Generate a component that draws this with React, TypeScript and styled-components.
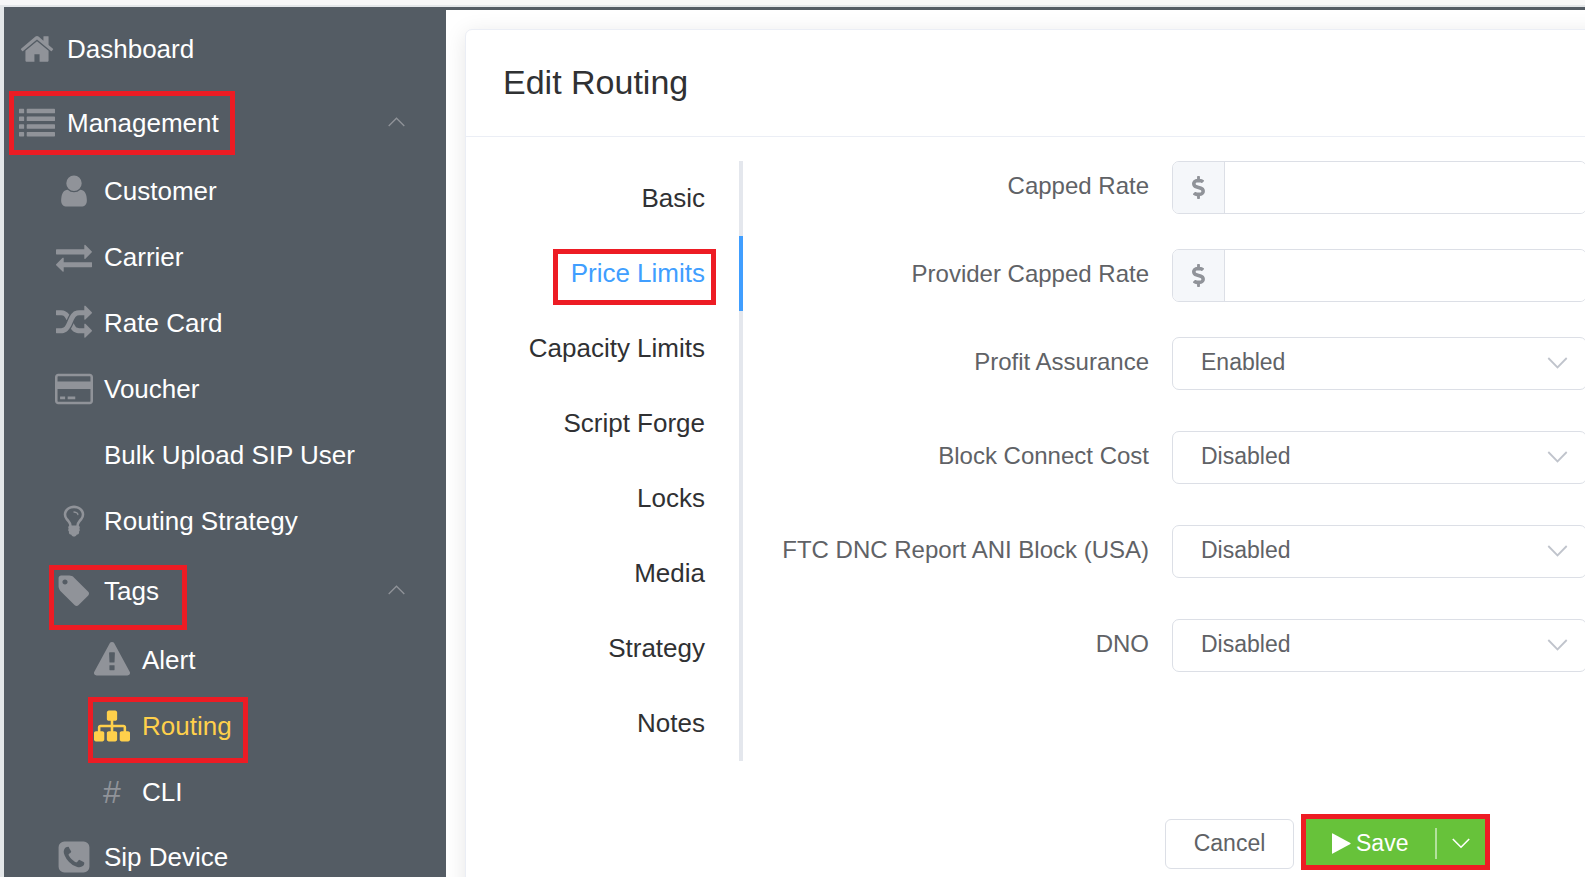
import React from "react";
import styled, { createGlobalStyle } from "styled-components";
import { FaDollarSign } from "react-icons/fa";

const GlobalStyle = createGlobalStyle`
  *, *::before, *::after { box-sizing: border-box; }
  body {
    margin: 0;
    overflow: hidden;
    background: #f7f7f7;
    font-family: "Liberation Sans", Arial, sans-serif;
  }
  button, input, select { font-family: inherit; }
`;

const glyphs: Record<string, { d: string; width?: number }> = {
  home: {
    d: "M1472 992v480q0 26-19 45t-45 19h-384v-384h-256v384h-384q-26 0-45-19t-19-45v-480q0-1 .5-3t.5-3l575-474 575 474q1 2 1 6zm223-69l-62 74q-8 9-21 11h-3q-13 0-21-7l-692-577-692 577q-12 8-24 7-13-2-21-11l-62-74q-8-10-7-23.5t11-21.5l719-599q32-26 76-26t76 26l244 204v-195q0-14 9-23t23-9h192q14 0 23 9t9 23v408l219 182q10 8 11 21.5t-7 23.5z",
  },
  list: {
    d: "M32 192h192q32 0 32 32v160q0 32-32 32h-192q-32 0-32-32v-160q0-32 32-32zM32 576h192q32 0 32 32v160q0 32-32 32h-192q-32 0-32-32v-160q0-32 32-32zM32 960h192q32 0 32 32v160q0 32-32 32h-192q-32 0-32-32v-160q0-32 32-32zM32 1344h192q32 0 32 32v160q0 32-32 32h-192q-32 0-32-32v-160q0-32 32-32zM416 192h1344q32 0 32 32v160q0 32-32 32h-1344q-32 0-32-32v-160q0-32 32-32zM416 576h1344q32 0 32 32v160q0 32-32 32h-1344q-32 0-32-32v-160q0-32 32-32zM416 960h1344q32 0 32 32v160q0 32-32 32h-1344q-32 0-32-32v-160q0-32 32-32zM416 1344h1344q32 0 32 32v160q0 32-32 32h-1344q-32 0-32-32v-160q0-32 32-32z",
  },
  user: {
    d: "M1536 1399q0 109-62.5 187t-150.5 78h-854q-88 0-150.5-78t-62.5-187q0-85 8.5-160.5t31.5-152 58.5-131 94-89 134.5-34.5q131 128 313 128t313-128q76 0 134.5 34.5t94 89 58.5 131 31.5 152 8.5 160.5zm-256-887q0 159-112.5 271.5t-271.5 112.5-271.5-112.5-112.5-271.5 112.5-271.5 271.5-112.5 271.5 112.5 112.5 271.5z",
  },
  exchange: {
    d: "M1792 1184v192q0 13-9.5 22.5t-22.5 9.5h-1376v192q0 13-9.5 22.5t-22.5 9.5q-12 0-24-10l-319-320q-9-9-9-22 0-14 9-23l320-320q9-9 23-9 13 0 22.5 9.5t9.5 22.5v192h1376q13 0 22.5 9.5t9.5 22.5zm0-544q0 14-9 23l-320 320q-9 9-23 9-13 0-22.5-9.5t-9.5-22.5v-192h-1376q-13 0-22.5-9.5t-9.5-22.5v-192q0-13 9.5-22.5t22.5-9.5h1376v-192q0-14 9-23t23-9q12 0 24 10l319 319q9 9 9 23z",
  },
  random: {
    d: "M666 481q-60 92-137 273-22-45-37-72.5t-40.5-63.5-51-56.5-63-35-81.5-14.5h-224q-14 0-23-9t-9-23v-192q0-14 9-23t23-9h224q250 0 410 225zm1126 799q0 14-9 23l-320 320q-9 9-23 9-13 0-22.5-9.5t-9.5-22.5v-192q-32 0-85 .5t-81 1-73-1-71-5-64-10.5-63-18.5-58-28.5-59-40-55-53.5-56-69.5q59-93 136-273 22 45 37 72.5t40.5 63.5 51 56.5 63 35 81.5 14.5h256v-192q0-14 9-23t23-9q12 0 24 10l319 319q9 9 9 23zm0-896q0 14-9 23l-320 320q-9 9-23 9-13 0-22.5-9.5t-9.5-22.5v-192h-256q-48 0-87 15t-69 45-51 61.5-45 77.5q-32 62-78 171-29 66-49.5 111t-54 105-64 100-74 83-90 68.5-106.5 42-128 16.5h-224q-14 0-23-9t-9-23v-192q0-14 9-23t23-9h224q48 0 87-15t69-45 51-61.5 45-77.5q32-62 78-171 29-66 49.5-111t54-105 64-100 74-83 90-68.5 106.5-42 128-16.5h256v-192q0-14 9-23t23-9q12 0 24 10l319 319q9 9 9 23z",
  },
  card: {
    width: 1920,
    d: "M1760 128q66 0 113 47t47 113v1216q0 66-47 113t-113 47h-1600q-66 0-113-47t-47-113v-1216q0-66 47-113t113-47h1600zm-1600 128q-13 0-22.5 9.5t-9.5 22.5v224h1664v-224q0-13-9.5-22.5t-22.5-9.5h-1600zm1600 1280q13 0 22.5-9.5t9.5-22.5v-608h-1664v608q0 13 9.5 22.5t22.5 9.5h1600zm-1504-128v-128h256v128h-256zm384 0v-128h384v128h-384z",
  },
  bulb: {
    d: "M1120 576q0 13-9.5 22.5t-22.5 9.5-22.5-9.5-9.5-22.5q0-46-54-71t-106-25q-13 0-22.5-9.5t-9.5-22.5 9.5-22.5 22.5-9.5q50 0 99.5 16t87 54 37.5 90zm160 0q0-72-34.5-134t-90-101.5-123-62-136.5-22.5-136.5 22.5-123 62-90 101.5-34.5 134q0 101 68 180 10 11 30.5 33t30.5 33q128 153 141 298h228q13-145 141-298 10-11 30.5-33t30.5-33q68-79 68-180zm128 0q0 155-103 268-45 49-74.5 87t-59.5 95.5-34 107.5q47 28 47 82 0 37-25 64 25 27 25 64 0 52-45 81 13 23 13 47 0 46-31.5 71t-77.5 25q-20 44-60 70t-87 26-87-26-60-70q-46 0-77.5-25t-31.5-71q0-24 13-47-45-29-45-81 0-37 25-64-25-27-25-64 0-54 47-82-4-50-34-107.5t-59.5-95.5-74.5-87q-103-113-103-268 0-99 44.5-184.5t117-142 164-89 186.5-32.5 186.5 32.5 164 89 117 142 44.5 184.5z",
  },
  tag: {
    d: "M576 448q0-53-37.5-90.5t-90.5-37.5-90.5 37.5-37.5 90.5 37.5 90.5 90.5 37.5 90.5-37.5 37.5-90.5zm1067 576q0 53-37 90l-491 492q-39 37-91 37-53 0-90-37l-715-716q-38-37-64.5-101t-26.5-117v-416q0-52 38-90t90-38h416q53 0 117 26.5t102 64.5l715 714q37 39 37 91z",
  },
  warning: {
    d: "M1024 1375v-190q0-14-9.5-23.5t-22.5-9.5h-192q-13 0-22.5 9.5t-9.5 23.5v190q0 14 9.5 23.5t22.5 9.5h192q13 0 22.5-9.5t9.5-23.5zm-2-374l18-459q0-12-10-19-13-11-24-11h-220q-11 0-24 11-10 7-10 21l17 457q0 10 10 16.5t24 6.5h185q14 0 23.5-6.5t10.5-16.5zm-14-934l768 1408q35 63-2 126-17 29-46.5 46t-63.5 17h-1536q-34 0-63.5-17t-46.5-46q-37-63-2-126l768-1408q17-31 47-49t65-18 65 18 47 49z",
  },
  sitemap: {
    d: "M1792 1248v320q0 40-28 68t-68 28h-320q-40 0-68-28t-28-68v-320q0-40 28-68t68-28h96v-192h-512v192h96q40 0 68 28t28 68v320q0 40-28 68t-68 28h-320q-40 0-68-28t-28-68v-320q0-40 28-68t68-28h96v-192h-512v192h96q40 0 68 28t28 68v320q0 40-28 68t-68 28h-320q-40 0-68-28t-28-68v-320q0-40 28-68t68-28h96v-192q0-52 38-90t90-38h512v-192h-96q-40 0-68-28t-28-68v-320q0-40 28-68t68-28h320q40 0 68 28t28 68v320q0 40-28 68t-68 28h-96v192h512q52 0 90 38t38 90v192h96q40 0 68 28t28 68z",
  },
  phone: {
    d: "M1408 1193q0-11-2-16t-18-16.5-40.5-25-47.5-26.5-45.5-25-28.5-15q-5-3-19-13t-25-15-21-5q-15 0-36.5 20.5t-39.5 45-38.5 45-33.5 20.5q-7 0-16.5-3.5t-15.5-6.5-17-9.5-14-8.5q-99-55-170-126.5t-127-170.5q-2-3-8.5-14t-9.5-17-6.5-15.5-3.5-16.5q0-13 20.5-33.5t45-38.5 45-39.5 20.5-36.5q0-10-5-21t-15-25-13-19q-3-6-15-28.5t-25-45.5-26.5-47.5-25-40.5-16.5-18-16-2q-48 0-101 22-46 21-80 94.5t-34 130.5q0 16 2.5 34t5 30.5 9 33 10 29.5 12.5 33 11 30q60 164 216.5 320.5t320.5 216.5q6 2 30 11t33 12.5 29.5 10 33 9 30.5 5 34 2.5q57 0 130.5-34t94.5-80q22-53 22-101zm256-777v960q0 119-84.5 203.5t-203.5 84.5h-960q-119 0-203.5-84.5t-84.5-203.5v-960q0-119 84.5-203.5t203.5-84.5h960q119 0 203.5 84.5t84.5 203.5z",
  },
};

const Shell = styled.div`
  display: flex;
  height: 100vh;
  overflow: hidden;
  border-top: 5px solid #f7f7f7;
  background: #e4e7e9;
  padding: 2px 0 0 4px;
`;

const Sidebar = styled.nav`
  flex: 0 0 442px;
  padding-top: 4px;
  background: #545c64;
  overflow: hidden;
`;

const Menu = styled.ul`
  list-style: none;
  margin: 0;
  padding: 0;
`;

const MenuItem = styled.li`
  margin: 0;
`;

const rowHeights = { root: 76, group: 72, item: 66 };

const MenuLink = styled.a<{ $level: number; $kind: keyof typeof rowHeights; $active?: boolean }>`
  position: relative;
  display: flex;
  align-items: center;
  gap: 11px;
  height: ${(p) => rowHeights[p.$kind]}px;
  padding: 0 41px ${(p) => (p.$kind === "item" && p.$level === 1 ? 2 : 0)}px ${(p) => [14, 51, 89][p.$level]}px;
  color: ${(p) => (p.$active ? "#ffd04b" : "#ffffff")};
  font-size: 26px;
  line-height: 32px;
  text-decoration: none;
  white-space: nowrap;
`;

const IconSlot = styled.span<{ $active?: boolean }>`
  display: flex;
  flex: 0 0 38px;
  justify-content: center;
  color: ${(p) => (p.$active ? "#ffd04b" : "#909399")};
  font-size: 32px;
`;

const ItemChevron = styled.svg`
  margin: 0 0 2px auto;
  stroke: #909399;
  stroke-width: 1.3;
`;

/* Red annotation frame laid over a control */
const Marker = styled.span<{ $top: number; $left: number; $right?: number; $width?: number; $height: number }>`
  position: absolute;
  top: ${(p) => p.$top}px;
  left: ${(p) => p.$left}px;
  ${(p) => (p.$right !== undefined ? `right: ${p.$right}px;` : `width: ${p.$width}px;`)}
  height: ${(p) => p.$height}px;
  border: 5px solid #ed1c24;
  pointer-events: none;
`;

const Main = styled.main`
  flex: 1;
  min-width: 0;
  overflow: hidden;
  border-top: 3px solid #545c64;
  background: #ffffff;
  padding: 19px 0 0 19px;
`;

const Card = styled.section`
  min-height: 100%;
  margin-right: -40px;
  padding-bottom: 37px;
  border: 1px solid #ebeef5;
  border-radius: 7px;
  background: #ffffff;
  box-shadow: 0 4px 22px rgba(0, 0, 0, 0.1);
`;

const CardHeader = styled.header`
  display: flex;
  align-items: center;
  height: 107px;
  padding: 0 37px 2px;
  border-bottom: 1px solid #ebeef5;
`;

const Title = styled.h1`
  margin: 0;
  color: #303133;
  font-size: 34px;
  font-weight: 400;
  line-height: 40px;
`;

const CardBody = styled.div`
  display: flex;
  align-items: flex-start;
  padding: 24px 37px 0;
`;

const Tabs = styled.div`
  display: flex;
  flex: 0 0 240px;
  flex-direction: column;
`;

const Tab = styled.button<{ $active?: boolean }>`
  position: relative;
  height: 75px;
  padding: 0 34px 2px 0;
  border: 0;
  border-right: 4px solid ${(p) => (p.$active ? "#409eff" : "#e4e7ed")};
  background: none;
  color: ${(p) => (p.$active ? "#409eff" : "#303133")};
  font-size: 26px;
  line-height: 32px;
  text-align: right;
  white-space: nowrap;
`;

const Form = styled.form`
  flex: 1;
  min-width: 0;
`;

const Field = styled.div<{ $gap: number }>`
  display: flex;
  gap: 23px;
  margin-bottom: ${(p) => p.$gap}px;
`;

const Label = styled.label`
  flex: 0 0 406px;
  color: #606266;
  font-size: 24px;
  line-height: 50px;
  text-align: right;
  white-space: nowrap;
`;

const InputGroup = styled.div`
  display: flex;
  flex: 1;
  min-width: 0;
  height: 53px;
  border: 1px solid #dcdfe6;
  border-radius: 7px;
  overflow: hidden;
`;

const Addon = styled.span`
  display: flex;
  flex: 0 0 52px;
  align-items: center;
  justify-content: center;
  border-right: 1px solid #dcdfe6;
  background: #f5f7fa;
  color: #909399;
  font-size: 23px;
`;

const TextInput = styled.input`
  flex: 1;
  min-width: 0;
  padding: 0 28px;
  border: 0;
  outline: 0;
  background: #ffffff;
  color: #606266;
  font-size: 23px;
`;

const SelectBox = styled.div`
  position: relative;
  flex: 1;
  min-width: 0;
  height: 53px;
`;

const Select = styled.select`
  width: 100%;
  height: 100%;
  padding: 0 60px 4px 28px;
  border: 1px solid #dcdfe6;
  border-radius: 7px;
  outline: 0;
  appearance: none;
  background: #ffffff;
  color: #606266;
  font-size: 23px;
`;

const SelectArrow = styled.svg`
  position: absolute;
  top: 20px;
  right: 19px;
  stroke: #c0c4cc;
  pointer-events: none;
`;

const Footer = styled.footer`
  display: flex;
  gap: 12px;
  padding: 58px 37px 0 699px;
`;

const CancelButton = styled.button`
  width: 129px;
  height: 50px;
  padding: 0 0 2px;
  border: 1px solid #dcdfe6;
  border-radius: 6px;
  background: #ffffff;
  color: #606266;
  font-size: 23px;
`;

const SplitButton = styled.div`
  position: relative;
  display: flex;
  width: 179px;
  height: 50px;
  background: #67c23a;
`;

const SaveButton = styled.button`
  display: flex;
  flex: 1;
  align-items: center;
  gap: 5px;
  padding: 0 0 2px 26px;
  border: 0;
  background: none;
  color: #ffffff;
  font-size: 23px;
`;

const DropButton = styled.button`
  display: flex;
  align-items: center;
  width: 50px;
  padding: 0 0 2px;
  border: 0;
  background: none;
`;

const Divider = styled.span`
  width: 2px;
  height: 31px;
  margin-right: 15px;
  background: rgba(255, 255, 255, 0.5);
`;

type Entry = {
  label: string;
  icon?: string;
  level: number;
  kind: keyof typeof rowHeights;
  active?: boolean;
  marker?: { $top: number; $left: number; $width: number; $height: number };
};

const menu: Entry[] = [
  { label: "Dashboard", icon: "home", level: 0, kind: "root" },
  { label: "Management", icon: "list", level: 0, kind: "group", marker: { $top: 4, $left: 5, $width: 226, $height: 64 } },
  { label: "Customer", icon: "user", level: 1, kind: "item" },
  { label: "Carrier", icon: "exchange", level: 1, kind: "item" },
  { label: "Rate Card", icon: "random", level: 1, kind: "item" },
  { label: "Voucher", icon: "card", level: 1, kind: "item" },
  { label: "Bulk Upload SIP User", level: 1, kind: "item" },
  { label: "Routing Strategy", icon: "bulb", level: 1, kind: "item" },
  { label: "Tags", icon: "tag", level: 1, kind: "group", marker: { $top: 10, $left: 45, $width: 138, $height: 65 } },
  { label: "Alert", icon: "warning", level: 2, kind: "item" },
  { label: "Routing", icon: "sitemap", level: 2, kind: "item", active: true, marker: { $top: 4, $left: 84, $width: 160, $height: 66 } },
  { label: "CLI", icon: "hash", level: 2, kind: "item" },
  { label: "Sip Device", icon: "phone", level: 1, kind: "item" },
];

const tabs = ["Basic", "Price Limits", "Capacity Limits", "Script Forge", "Locks", "Media", "Strategy", "Notes"];

const rateFields = [
  { id: "capped-rate", label: "Capped Rate" },
  { id: "provider-capped-rate", label: "Provider Capped Rate" },
];

const selectFields = [
  { id: "profit-assurance", label: "Profit Assurance", value: "Enabled" },
  { id: "block-connect-cost", label: "Block Connect Cost", value: "Disabled" },
  { id: "ftc-dnc", label: "FTC DNC Report ANI Block (USA)", value: "Disabled" },
  { id: "dno", label: "DNO", value: "Disabled" },
];

function MenuIcon({ name }: { name?: string }) {
  if (name === "hash") return <>#</>;
  if (!name) return null;
  const { d, width = 1792 } = glyphs[name];
  return (
    <svg width={width === 1920 ? 38 : 36} height={36} viewBox={`0 0 ${width} 1792`} fill="currentColor" aria-hidden="true">
      <path d={d} />
    </svg>
  );
}

export default function App() {
  return (
    <>
      <GlobalStyle />
      <Shell>
        <Sidebar>
          <Menu>
            {menu.map((m) => (
              <MenuItem key={m.label}>
                <MenuLink href="#" $level={m.level} $kind={m.kind} $active={m.active}>
                  <IconSlot $active={m.active}>
                    <MenuIcon name={m.icon} />
                  </IconSlot>
                  {m.label}
                  {m.kind === "group" && (
                    <ItemChevron width="17" height="10" viewBox="0 0 17 10" fill="none" aria-hidden="true">
                      <path d="M0.7 9L8.5 1.2L16.3 9" />
                    </ItemChevron>
                  )}
                  {m.marker && <Marker {...m.marker} />}
                </MenuLink>
              </MenuItem>
            ))}
          </Menu>
        </Sidebar>
        <Main>
          <Card>
            <CardHeader>
              <Title>Edit Routing</Title>
            </CardHeader>
            <CardBody>
              <Tabs role="tablist">
                {tabs.map((t) => {
                  const active = t === "Price Limits";
                  return (
                    <Tab key={t} type="button" role="tab" aria-selected={active} $active={active}>
                      {t}
                      {active && <Marker $top={13} $left={50} $right={23} $height={56} />}
                    </Tab>
                  );
                })}
              </Tabs>
              <Form>
                {rateFields.map((f) => (
                  <Field key={f.id} $gap={35}>
                    <Label htmlFor={f.id}>{f.label}</Label>
                    <InputGroup>
                      <Addon>
                        <FaDollarSign />
                      </Addon>
                      <TextInput id={f.id} type="text" />
                    </InputGroup>
                  </Field>
                ))}
                {selectFields.map((f) => (
                  <Field key={f.id} $gap={41}>
                    <Label htmlFor={f.id}>{f.label}</Label>
                    <SelectBox>
                      <Select id={f.id} defaultValue={f.value}>
                        <option>Enabled</option>
                        <option>Disabled</option>
                      </Select>
                      <SelectArrow width="21" height="12" viewBox="0 0 21 12" fill="none" strokeWidth="1.8" aria-hidden="true">
                        <path d="M1.3 1L10.5 10.4L19.7 1" />
                      </SelectArrow>
                    </SelectBox>
                  </Field>
                ))}
              </Form>
            </CardBody>
            <Footer>
              <CancelButton type="button">Cancel</CancelButton>
              <SplitButton>
                <SaveButton type="button">
                  <svg width="19" height="21" viewBox="0 0 19 21" fill="currentColor" aria-hidden="true">
                    <path d="M0 0.8Q0 0 0.8 0.4L18.4 10Q19 10.5 18.4 11L0.8 20.6Q0 21 0 20.2Z" />
                  </svg>
                  Save
                </SaveButton>
                <DropButton type="button" aria-label="More save options">
                  <Divider />
                  <svg width="18" height="11" viewBox="0 0 18 11" fill="none" stroke="#ffffff" strokeWidth="1.6" aria-hidden="true">
                    <path d="M0.8 1L9 9.2L17.2 1" />
                  </svg>
                </DropButton>
                <Marker $top={-5} $left={-5} $right={-5} $height={56} />
              </SplitButton>
            </Footer>
          </Card>
        </Main>
      </Shell>
    </>
  );
}
